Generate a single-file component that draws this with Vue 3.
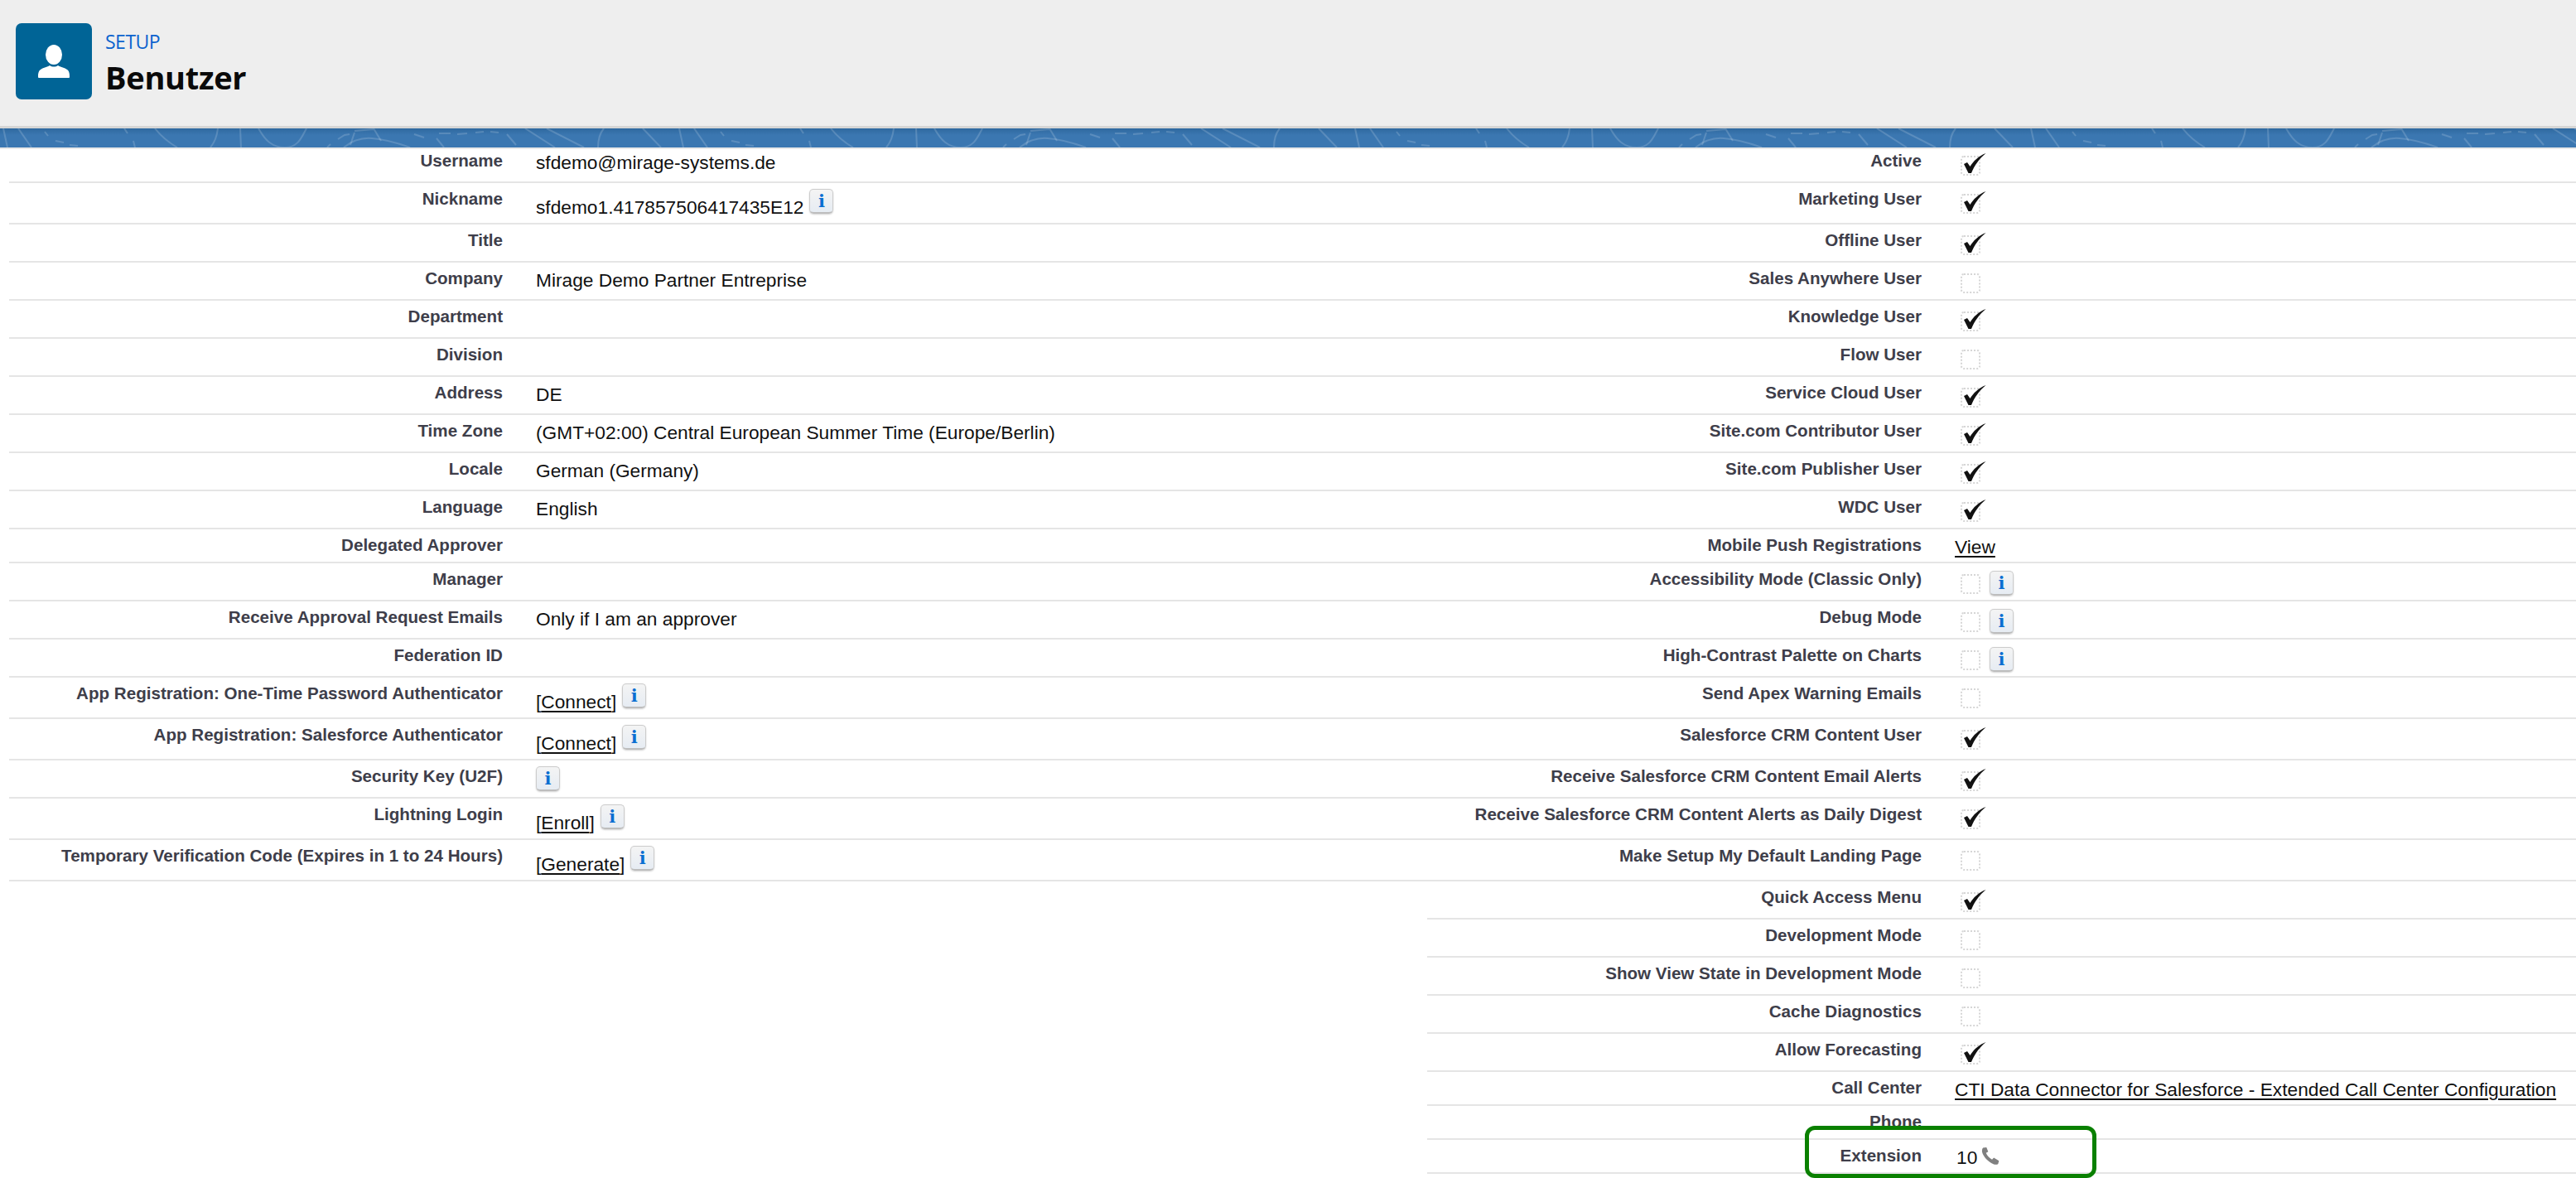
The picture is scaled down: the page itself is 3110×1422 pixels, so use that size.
<script setup>
const rows = [
  { h: 'first', l: { label: 'Username', text: 'sfdemo@mirage-systems.de' }, r: { label: 'Active', check: true } },
  { h: 'tall', l: { label: 'Nickname', text: 'sfdemo1.417857506417435E12', info: true }, r: { label: 'Marketing User', check: true } },
  { h: 'mid', l: { label: 'Title' }, r: { label: 'Offline User', check: true } },
  { h: 'mid', l: { label: 'Company', text: 'Mirage Demo Partner Entreprise' }, r: { label: 'Sales Anywhere User', check: false } },
  { h: 'mid', l: { label: 'Department' }, r: { label: 'Knowledge User', check: true } },
  { h: 'mid', l: { label: 'Division' }, r: { label: 'Flow User', check: false } },
  { h: 'mid', l: { label: 'Address', text: 'DE' }, r: { label: 'Service Cloud User', check: true } },
  { h: 'mid', l: { label: 'Time Zone', text: '(GMT+02:00) Central European Summer Time (Europe/Berlin)' }, r: { label: 'Site.com Contributor User', check: true } },
  { h: 'mid', l: { label: 'Locale', text: 'German (Germany)' }, r: { label: 'Site.com Publisher User', check: true } },
  { h: 'mid', l: { label: 'Language', text: 'English' }, r: { label: 'WDC User', check: true } },
  { h: 'short', l: { label: 'Delegated Approver' }, r: { label: 'Mobile Push Registrations', link: 'View' } },
  { h: 'mid', l: { label: 'Manager' }, r: { label: 'Accessibility Mode (Classic Only)', check: false, info: true } },
  { h: 'mid', l: { label: 'Receive Approval Request Emails', text: 'Only if I am an approver' }, r: { label: 'Debug Mode', check: false, info: true } },
  { h: 'mid', l: { label: 'Federation ID' }, r: { label: 'High-Contrast Palette on Charts', check: false, info: true } },
  { h: 'tall', l: { label: 'App Registration: One-Time Password Authenticator', bracket: 'Connect', info: true }, r: { label: 'Send Apex Warning Emails', check: false } },
  { h: 'tall', l: { label: 'App Registration: Salesforce Authenticator', bracket: 'Connect', info: true }, r: { label: 'Salesforce CRM Content User', check: true } },
  { h: 'mid', l: { label: 'Security Key (U2F)', info: true }, r: { label: 'Receive Salesforce CRM Content Email Alerts', check: true } },
  { h: 'tall', l: { label: 'Lightning Login', bracket: 'Enroll', info: true }, r: { label: 'Receive Salesforce CRM Content Alerts as Daily Digest', check: true } },
  { h: 'tall', l: { label: 'Temporary Verification Code (Expires in 1 to 24 Hours)', bracket: 'Generate', info: true }, r: { label: 'Make Setup My Default Landing Page', check: false } },
  { h: 'mid', r: { label: 'Quick Access Menu', check: true } },
  { h: 'mid', r: { label: 'Development Mode', check: false } },
  { h: 'mid', r: { label: 'Show View State in Development Mode', check: false } },
  { h: 'mid', r: { label: 'Cache Diagnostics', check: false } },
  { h: 'mid', r: { label: 'Allow Forecasting', check: true } },
  { h: 'short', r: { label: 'Call Center', link: 'CTI Data Connector for Salesforce - Extended Call Center Configuration' } },
  { h: 'short', r: { label: 'Phone' } },
  { h: 'short', r: { label: 'Extension', text: '10', phone: true } }
]

const sides = (row) => [
  { key: 'l', cell: row.l },
  { key: 'r', cell: row.r }
]
const hasToggle = (cell) => cell.check === true || cell.check === false
const isLow = (cell) => cell.info && (cell.text || cell.bracket)
</script>

<template>
  <div class="page">
    <header class="head">
      <div class="logo">
        <svg viewBox="0 0 92 92" width="92" height="92">
          <ellipse cx="46" cy="38" rx="10" ry="12" fill="#fff" />
          <path d="M27 65c0-3 0-7 3-9 4-3 8-3 11-5 3 2 7 2 10 0 3 2 7 2 11 5 3 2 3 6 3 9 0 1-1 1-2 1H29c-1 0-2 0-2-1z" fill="#fff" />
        </svg>
      </div>
      <div class="titles">
        <div class="eyebrow">SETUP</div>
        <h1 class="title">Benutzer</h1>
      </div>
    </header>

    <div class="band">
      <svg width="100%" height="23">
        <defs>
          <pattern id="swirl" width="816" height="23" patternUnits="userSpaceOnUse">
            <g fill="none" stroke="#fff" stroke-opacity=".16" stroke-width="2">
              <path d="M4 0l5 23M22 0l16 23" />
              <path d="M54 4l4 5M67 15l10 2M84 20l10 1" />
              <path d="M150 0l4 6M161 15l2 8" />
              <path d="M187 0c8 10 18 18 27 23" />
              <path d="M263 0c-1 9-3 16-9 23M290 0l1 23" />
              <path d="M312 0c8 14 16 23 32 23s20-12 26-23" />
              <path d="M395 23l4-4M415 23c10-8 22-12 34-11 16 1 32 6 46 11" />
              <path d="M408 13l8-5 6-1M428 5l-5 15M428 3l23-2M451 0l9 15" />
              <path d="M500 7l12 4M530 6l14 0M552 7l12-1M574 5l10-1M592 4l10 1" />
              <path d="M527 12l9 11M612 7l11 13M634 0l36 23M660 0l45 23" />
              <path d="M729 0c-5 6-7 14-7 23M776 0l22 23" />
            </g>
          </pattern>
        </defs>
        <rect width="100%" height="23" fill="url(#swirl)" />
      </svg>
    </div>

    <section class="table">
      <div v-for="(row, i) in rows" :key="i" class="row" :class="row.h">
        <template v-for="side in sides(row)" :key="side.key">
          <template v-if="side.cell">
            <div class="cell label">{{ side.cell.label }}</div>
            <div class="cell value" :class="{ low: isLow(side.cell) }">
              <span v-if="hasToggle(side.cell)" class="box">
                <svg v-if="side.cell.check" class="tick" viewBox="0 0 28 24" width="28" height="24">
                  <path d="M1 13l4-2 3.5 5C12 10 19 3 27.5 0 20 6 13.500 15 10 24H6.500z" fill="#111" />
                </svg>
              </span>
              <span v-if="side.cell.text" class="text" :class="{ inset: side.cell.phone }">{{ side.cell.text }}</span>
              <span v-if="side.cell.link" class="text"><a class="link">{{ side.cell.link }}</a></span>
              <span v-if="side.cell.bracket" class="text">[<a class="link">{{ side.cell.bracket }}</a>]</span>
              <span v-if="side.cell.phone" class="phone">
                <svg viewBox="0 0 24 20" width="25" height="21">
                  <path d="M2 0.500l4-.5 2 5-2.500 1.500c1.500 3.500 3.500 5.500 7 7.500l2-2 6 3.500-1 3.500c-1 1-3 1-5 .5C8 17 2.500 11 1 5.500c-.3-2 0-4 1-5z" fill="#808080" />
                </svg>
              </span>
              <span v-if="side.cell.info" class="info" :class="{ solo: hasToggle(side.cell) }">i</span>
            </div>
          </template>
          <template v-else>
            <div class="blank"></div>
            <div class="blank"></div>
          </template>
        </template>
      </div>
      <div class="highlight"></div>
    </section>
  </div>
</template>

<style scoped>
.page {
  width: 3110px;
  height: 1422px;
  overflow: hidden;
  background: #fff;
  font-family: "Liberation Sans", Arial, sans-serif;
}

.head {
  box-sizing: border-box;
  height: 155px;
  background: #eeeeee;
  border-bottom: 3px solid #d5d5d5;
  padding: 28px 0 0 19px;
  display: flex;
  gap: 16px;
}

.logo {
  width: 92px;
  height: 92px;
  border-radius: 7px;
  background: #006496;
}

.logo svg {
  display: block;
}

.titles {
  font-family: "Open Sans", sans-serif;
}

.eyebrow {
  font-size: 23px;
  line-height: 28px;
  margin-top: 8px;
  color: #0b63ce;
  letter-spacing: -0.5px;
}

.title {
  margin: 5px 0 0;
  font-size: 38px;
  line-height: 48px;
  font-weight: 700;
  color: #0a0a0a;
  letter-spacing: -0.3px;
}

.band {
  height: 23px;
  background: linear-gradient(#2f699f, #3b77b1 35%);
  border-bottom: 2px solid #e8e8e8;
}

.band svg {
  display: block;
}

.table {
  position: relative;
  padding-left: 11px;
}

.row {
  display: grid;
  grid-template-columns: 616px 1096px 617px 770px;
  box-sizing: border-box;
}

.first { height: 41px; --pad: 1px; }
.tall { height: 50px; --pad: 6px; }
.mid { height: 46px; --pad: 6px; }
.short { height: 41px; --pad: 6px; }

.cell {
  box-sizing: border-box;
  border-bottom: 2px solid #e5e5e5;
  padding-top: var(--pad);
}

.label {
  padding-top: calc(var(--pad) + 1px);
  padding-right: 20px;
  text-align: right;
  font-size: 20.6px;
  line-height: 24px;
  font-weight: 700;
  color: #3e3e4a;
  white-space: nowrap;
}

.value {
  display: flex;
  align-items: flex-start;
  padding-left: 20px;
  font-size: 22.72px;
  line-height: 24px;
  color: #111;
  white-space: nowrap;
}

.text {
  margin-top: 3px;
}

.text.inset {
  margin-left: 2px;
}

.low .text {
  margin-top: 11px;
}

.link {
  color: #111;
  text-decoration: underline;
  text-decoration-thickness: 2px;
  text-underline-offset: 3px;
}

.box {
  position: relative;
  box-sizing: border-box;
  width: 24px;
  height: 24px;
  margin: 7px 0 0 7px;
  border: 2px dotted #d6d6d6;
  border-radius: 4px;
}

.tick {
  position: absolute;
  left: 1px;
  top: -5px;
}

.info {
  box-sizing: border-box;
  width: 29px;
  height: 30px;
  margin-top: 1px;
  margin-left: 7px;
  border: 1px solid #cccccc;
  border-bottom: 2px solid #bdbdbd;
  border-radius: 5px;
  background: linear-gradient(#f4f4f4, #e6ecf3);
  box-shadow: 0 1px 2px rgba(0, 0, 0, .18);
  color: #0a6ed1;
  font-family: "DejaVu Serif", serif;
  font-size: 21px;
  font-weight: 700;
  line-height: 27px;
  text-align: center;
}

.info.solo {
  margin: 3px 0 0 11px;
}

.info:first-child {
  margin-left: 0;
}

.phone {
  margin: 3px 0 0 5px;
  height: 21px;
}

.phone svg {
  display: block;
}

.highlight {
  position: absolute;
  left: 2179px;
  top: 1179px;
  box-sizing: border-box;
  width: 352px;
  height: 63px;
  border: 5px solid #0a8000;
  border-radius: 12px;
  pointer-events: none;
}
</style>

<style>
html, body { margin: 0; background: #fff; }
</style>
